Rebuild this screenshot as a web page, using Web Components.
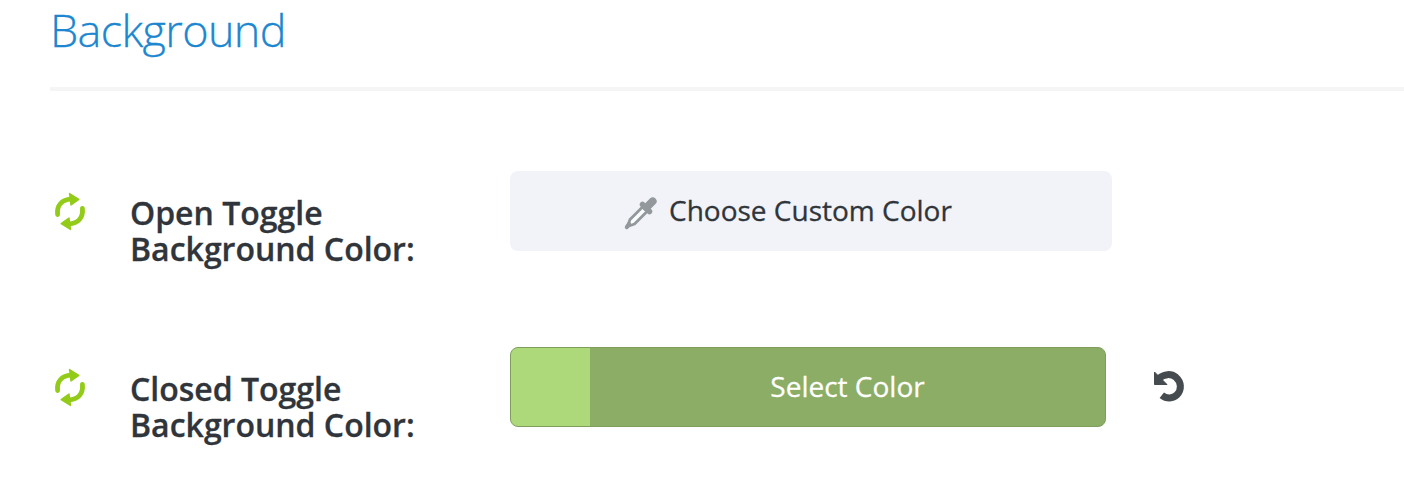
<!DOCTYPE html>
<html lang="en">
<head>
<meta charset="utf-8">
<title>Background</title>
<style>
  body {
    margin: 0;
    background: #fff;
    color: #2f353b;
    font-family: "Open Sans", sans-serif;
    overflow: hidden;
  }
</style>
</head>
<body>
<settings-section heading="Background">
  <setting-row>
    <span slot="label">Open Toggle<br>Background Color:</span>
    <choose-button>Choose Custom Color</choose-button>
  </setting-row>
  <setting-row>
    <span slot="label">Closed Toggle<br>Background Color:</span>
    <color-button color="#add97a">Select Color</color-button>
    <undo-button></undo-button>
  </setting-row>
</settings-section>

<script>
function makeTemplate(html) {
  const template = document.createElement("template");
  template.innerHTML = html;
  return template;
}

const sectionTemplate = makeTemplate(`
<style>
  :host {
    display: block;
    padding-left: 50px;
  }

  h2 {
    box-sizing: border-box;
    height: 91px;
    margin: 0 0 80px;
    border-bottom: 4px solid #f5f5f5;
    color: #1c87d0;
    font-size: 45px;
    font-weight: 300;
    letter-spacing: -0.65px;
    line-height: 60px;
    -webkit-text-stroke: 0.3px;
  }

  .rows {
    display: flex;
    flex-direction: column;
    gap: 76px;
  }
</style>
<h2></h2>
<div class="rows"><slot></slot></div>
`);

class SettingsSection extends HTMLElement {
  constructor() {
    super();
    this.attachShadow({ mode: "open" });
    this.shadowRoot.appendChild(sectionTemplate.content.cloneNode(true));
    this.shadowRoot.querySelector("h2").textContent = this.getAttribute("heading");
  }
}

const rowTemplate = makeTemplate(`
<style>
  :host {
    display: grid;
    grid-template-columns: 80px 380px 1fr;
    height: 100px;
  }

  svg {
    display: block;
    margin: 21px 0 0 4px;
  }

  .label {
    padding-top: 24px;
    font-size: 32px;
    font-weight: 600;
    line-height: 36px;
    white-space: nowrap;
    -webkit-text-stroke: 0.3px;
  }

  .control {
    display: flex;
    align-items: flex-start;
  }
</style>
<svg width="32" height="40" viewBox="0 0 32 40">
  <g fill="none" stroke="#92cc18" stroke-width="4.8" stroke-linecap="round">
    <path d="M3.600 22.500C2.500 13.500 8 7.300 17 7.100"/>
    <path d="M28.400 16.500C29.500 25.500 24 31.700 15 31.900"/>
  </g>
  <g fill="#92cc18" stroke="#92cc18" stroke-width="1.400" stroke-linejoin="round">
    <path d="M15.500 1.500L24.800 7.400 17 13Z"/>
    <path d="M16.500 37.500L7.200 31.600 15 26Z"/>
  </g>
</svg>
<div class="label"><slot name="label"></slot></div>
<div class="control"><slot></slot></div>
`);

class SettingRow extends HTMLElement {
  constructor() {
    super();
    this.attachShadow({ mode: "open" });
    this.shadowRoot.appendChild(rowTemplate.content.cloneNode(true));
  }
}

const chooseTemplate = makeTemplate(`
<style>
  :host {
    display: block;
  }

  button {
    display: flex;
    align-items: center;
    box-sizing: border-box;
    width: 602px;
    height: 80px;
    padding: 0 0 0 114px;
    border: 0;
    border-radius: 8px;
    background: #f1f3f9;
    color: #2f353b;
    font: 400 28px/40px "Open Sans", sans-serif;
    white-space: nowrap;
    -webkit-text-stroke: 0.3px;
  }

  svg {
    margin: 3px 11px 0 0;
  }

  span {
    padding-bottom: 2px;
  }
</style>
<button>
  <svg width="34" height="34" viewBox="0 0 34 34">
    <path d="M19.500 10L6 23.500 3.500 30.500 10.500 28 24 14.500" fill="#fafcfd" stroke="#92989b" stroke-width="2.800" stroke-linejoin="round"/>
    <path d="M18.500 8.500L25.500 15.500" fill="none" stroke="#92989b" stroke-width="5.500" stroke-linecap="round"/>
    <path d="M22.500 11.500L28.700 5.300" fill="none" stroke="#92989b" stroke-width="7.800" stroke-linecap="round"/>
    <path d="M2.800 31.200L5 27.800" stroke="#92989b" stroke-width="4" stroke-linecap="round"/>
  </svg>
  <span><slot></slot></span>
</button>
`);

class ChooseButton extends HTMLElement {
  constructor() {
    super();
    this.attachShadow({ mode: "open" });
    this.shadowRoot.appendChild(chooseTemplate.content.cloneNode(true));
  }
}

const colorTemplate = makeTemplate(`
<style>
  :host {
    display: block;
  }

  button {
    display: flex;
    box-sizing: border-box;
    width: 596px;
    height: 80px;
    padding: 0;
    overflow: hidden;
    border: 1px solid #7f9e5e;
    border-radius: 8px;
    background: #8bad65;
    color: #fff;
    font: 400 28px/76px "Open Sans", sans-serif;
    -webkit-text-stroke: 0.3px;
  }

  .swatch {
    width: 79px;
    height: 78px;
    background: var(--swatch);
  }

  .text {
    flex: 1;
    text-align: center;
  }
</style>
<button>
  <span class="swatch"></span>
  <span class="text"><slot></slot></span>
</button>
`);

class ColorButton extends HTMLElement {
  constructor() {
    super();
    this.attachShadow({ mode: "open" });
    this.shadowRoot.appendChild(colorTemplate.content.cloneNode(true));
    this.shadowRoot
      .querySelector(".swatch")
      .style.setProperty("--swatch", this.getAttribute("color"));
  }
}

const undoTemplate = makeTemplate(`
<style>
  :host {
    display: block;
    margin: 23px 0 0 47px;
  }

  svg {
    display: block;
  }
</style>
<svg width="34" height="34" viewBox="0 0 34 34">
  <path d="M6 8.500C11 3.800 18 3.300 23 7.300C28.500 12 28.800 20 24 24.800C20 28.800 13.500 29 8.800 25.200" fill="none" stroke="#454b4f" stroke-width="7"/>
  <path d="M1.500 2L1.500 14.500 14 14.500Z" fill="#454b4f" stroke="#454b4f" stroke-linejoin="round"/>
</svg>
`);

class UndoButton extends HTMLElement {
  constructor() {
    super();
    this.attachShadow({ mode: "open" });
    this.shadowRoot.appendChild(undoTemplate.content.cloneNode(true));
  }
}

window.customElements.define("settings-section", SettingsSection);
window.customElements.define("setting-row", SettingRow);
window.customElements.define("choose-button", ChooseButton);
window.customElements.define("color-button", ColorButton);
window.customElements.define("undo-button", UndoButton);
</script>
</body>
</html>
